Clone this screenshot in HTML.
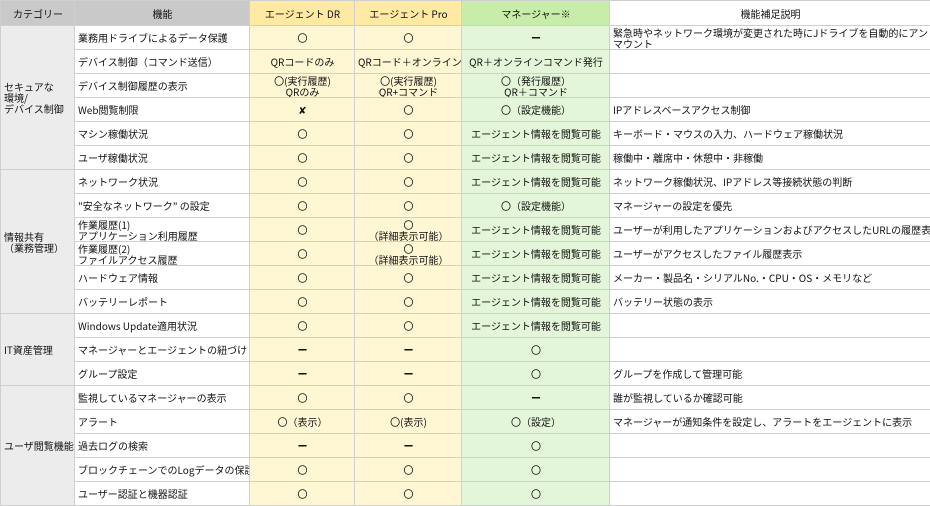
<!DOCTYPE html><html><head><meta charset="utf-8"><style>
body{margin:0;background:#fff;width:930px;height:506px;overflow:hidden}
table{border-collapse:collapse;table-layout:fixed;width:930px;font-family:"Noto Sans CJK JP","Liberation Sans",sans-serif;font-size:10px;color:#111}
td,th{border:1px solid #cfcfcf;padding:0 2px 0 3px;height:23px;line-height:11px;overflow:hidden;white-space:nowrap}
th{font-weight:normal;height:24px;background:#c9c9c9}
th.y{background:#ffe9a3}th.g{background:#c8ecaa}th.w{background:#fff}
td.c{background:#ececec;text-align:left}
td.y{background:#fff6d4;text-align:center}
td.g{background:#e3f6d9;text-align:center}
td.d{white-space:normal}
b{font-weight:bold}
</style></head><body><table>
<colgroup><col style="width:74px"><col style="width:175px"><col style="width:105px"><col style="width:107px"><col style="width:148px"><col style="width:321px"></colgroup>
<tr><th>カテゴリー</th><th>機能</th><th class="y">エージェント DR</th><th class="y">エージェント Pro</th><th class="g">マネージャー※</th><th class="w">機能補足説明</th></tr>
<tr><td class="c" rowspan="6">セキュアな<br>環境/<br>デバイス制御</td><td>業務用ドライブによるデータ保護</td><td class="y">〇</td><td class="y">〇</td><td class="g"><b>ー</b></td><td class="d">緊急時やネットワーク環境が変更された時にJドライブを自動的にアンマウント</td></tr>
<tr><td>デバイス制御（コマンド送信）</td><td class="y">QRコードのみ</td><td class="y">QRコード＋オンライン</td><td class="g">QR＋オンラインコマンド発行</td><td></td></tr>
<tr><td>デバイス制御履歴の表示</td><td class="y">〇(実行履歴)<br>QRのみ</td><td class="y">〇(実行履歴)<br>QR+コマンド</td><td class="g">〇（発行履歴）<br>QR＋コマンド</td><td></td></tr>
<tr><td>Web閲覧制限</td><td class="y">✘</td><td class="y">〇</td><td class="g">〇（設定機能）</td><td>IPアドレスベースアクセス制御</td></tr>
<tr><td>マシン稼働状況</td><td class="y">〇</td><td class="y">〇</td><td class="g">エージェント情報を閲覧可能</td><td>キーボード・マウスの入力、ハードウェア稼働状況</td></tr>
<tr><td>ユーザ稼働状況</td><td class="y">〇</td><td class="y">〇</td><td class="g">エージェント情報を閲覧可能</td><td>稼働中・離席中・休憩中・非稼働</td></tr>
<tr><td class="c" rowspan="6">情報共有<br>（業務管理）</td><td>ネットワーク状況</td><td class="y">〇</td><td class="y">〇</td><td class="g">エージェント情報を閲覧可能</td><td>ネットワーク稼働状況、IPアドレス等接続状態の判断</td></tr>
<tr><td>”安全なネットワーク” の設定</td><td class="y">〇</td><td class="y">〇</td><td class="g">〇（設定機能）</td><td>マネージャーの設定を優先</td></tr>
<tr><td>作業履歴(1)<br>アプリケーション利用履歴</td><td class="y">〇</td><td class="y">〇<br>（詳細表示可能）</td><td class="g">エージェント情報を閲覧可能</td><td>ユーザーが利用したアプリケーションおよびアクセスしたURLの履歴表示</td></tr>
<tr><td>作業履歴(2)<br>ファイルアクセス履歴</td><td class="y">〇</td><td class="y">〇<br>（詳細表示可能）</td><td class="g">エージェント情報を閲覧可能</td><td>ユーザーがアクセスしたファイル履歴表示</td></tr>
<tr><td>ハードウェア情報</td><td class="y">〇</td><td class="y">〇</td><td class="g">エージェント情報を閲覧可能</td><td>メーカー・製品名・シリアルNo.・CPU・OS・メモリなど</td></tr>
<tr><td>バッテリーレポート</td><td class="y">〇</td><td class="y">〇</td><td class="g">エージェント情報を閲覧可能</td><td>バッテリー状態の表示</td></tr>
<tr><td class="c" rowspan="3">IT資産管理</td><td>Windows Update適用状況</td><td class="y">〇</td><td class="y">〇</td><td class="g">エージェント情報を閲覧可能</td><td></td></tr>
<tr><td>マネージャーとエージェントの紐づけ</td><td class="y"><b>ー</b></td><td class="y"><b>ー</b></td><td class="g">〇</td><td></td></tr>
<tr><td>グループ設定</td><td class="y"><b>ー</b></td><td class="y"><b>ー</b></td><td class="g">〇</td><td>グループを作成して管理可能</td></tr>
<tr><td class="c" rowspan="5">ユーザ閲覧機能</td><td>監視しているマネージャーの表示</td><td class="y">〇</td><td class="y">〇</td><td class="g"><b>ー</b></td><td>誰が監視しているか確認可能</td></tr>
<tr><td>アラート</td><td class="y">〇（表示）</td><td class="y">〇(表示)</td><td class="g">〇（設定）</td><td>マネージャーが通知条件を設定し、アラートをエージェントに表示</td></tr>
<tr><td>過去ログの検索</td><td class="y"><b>ー</b></td><td class="y"><b>ー</b></td><td class="g">〇</td><td></td></tr>
<tr><td>ブロックチェーンでのLogデータの保護</td><td class="y">〇</td><td class="y">〇</td><td class="g">〇</td><td></td></tr>
<tr><td>ユーザー認証と機器認証</td><td class="y">〇</td><td class="y">〇</td><td class="g">〇</td><td></td></tr>
</table></body></html>
